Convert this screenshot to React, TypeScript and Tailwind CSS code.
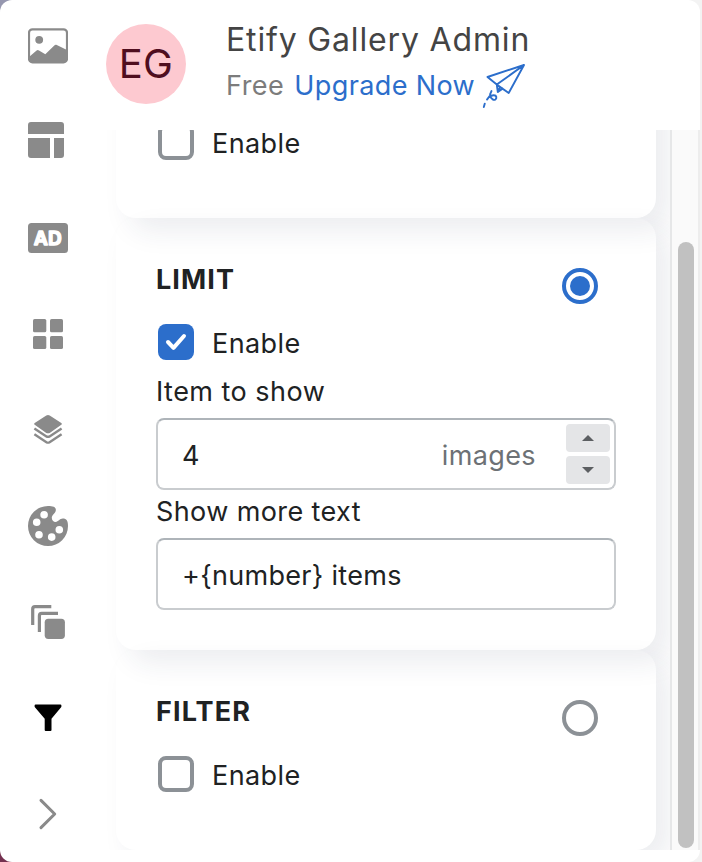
import React from "react";

function Icon({ children, active = false }: { children: React.ReactNode; active?: boolean }) {
  return (
    <button className={`flex h-24 w-24 shrink-0 items-center justify-center ${active ? "text-black" : "text-[#8a8a8a]"}`}>
      <svg width="40" height="40" viewBox="0 0 40 40" fill="currentColor">
        {children}
      </svg>
    </button>
  );
}

function Sidebar() {
  return (
    <nav className="-mt-0.5 flex w-24 shrink-0 flex-col">
      <Icon>
        <rect x="1" y="3.3" width="38" height="33" rx="3.5" fill="none" stroke="currentColor" strokeWidth="2.2" />
        <circle cx="11.2" cy="13.8" r="3.9" />
        <path d="M1 31l7.6-6.6c.8-.7 1.6-.7 2.4 0L17.3 28.3l9-8.8c.9-.9 1.5-.9 2.5-.4L39 24v9.5a3 3 0 0 1-3 3H4a3 3 0 0 1-3-3z" />
      </Icon>
      <Icon>
        <path d="M3 0h30a3 3 0 0 1 3 3v9H0V3a3 3 0 0 1 3-3zM0 16h22v20H3a3 3 0 0 1-3-3zM26 16h10v17a3 3 0 0 1-3 3h-7z" />
      </Icon>
      <Icon>
        <rect y="5" width="40" height="30" rx="3.5" />
        <text x="19.8" y="27" textAnchor="middle" fill="white" stroke="white" strokeWidth="1.3" strokeLinejoin="round" className="font-['Inter',sans-serif] text-[19px] font-bold">AD</text>
      </Icon>
      <Icon>
        <rect x="5" y="5" width="13.3" height="13.3" rx="1.6" />
        <rect x="22" y="5" width="13" height="13.3" rx="1.6" />
        <rect x="5" y="22" width="13.3" height="13" rx="1.6" />
        <rect x="22" y="22" width="13" height="13" rx="1.6" />
      </Icon>
      <Icon>
        <path d="M18.3 5.5q1.7-.9 3.4 0l11.6 7.4q1.4.9 0 1.8l-11.6 8.2q-1.7.9-3.4 0l-11.6-8.2q-1.4-.9 0-1.8z" />
        <path d="M6.4 18.4l12 8q1.6.9 3.2 0l12-8M6.4 24.2l12 8q1.6.9 3.2 0l12-8" fill="none" stroke="currentColor" strokeWidth="2.4" />
      </Icon>
      <Icon>
        <path fillRule="evenodd" d="M20 0c5.5 0 8.8 1.2 7.6 5.2-.5 1.9-3.8 3.8-3.8 6.6 0 2.4 1.6 4.2 3.9 4.2 2.5 0 4-3.4 7.1-3.4 3.7 0 5.2 2.3 5.2 7.4a20 20 0 1 1-20-20zM16.1 5a3.8 3.8 0 1 0 0 7.6 3.8 3.8 0 0 0 0-7.6zM8.7 12.5a3.8 3.8 0 1 0 0 7.6 3.8 3.8 0 0 0 0-7.6zM11 24.9a3.8 3.8 0 1 0 0 7.6 3.8 3.8 0 0 0 0-7.6zM23.7 27.3a3.8 3.8 0 1 0 0 7.6 3.8 3.8 0 0 0 0-7.6zM31.3 19.9a3.8 3.8 0 1 0 0 7.6 3.8 3.8 0 0 0 0-7.6z" />
      </Icon>
      <Icon>
        <path d="M23.3 4.7H7a2.3 2.3 0 0 0-2.3 2.3v16M30 11.4H13.7a2.3 2.3 0 0 0-2.3 2.3v16.3" fill="none" stroke="currentColor" strokeWidth="3.2" />
        <rect x="16.7" y="16.7" width="20.2" height="20.2" rx="3.6" />
      </Icon>
      <Icon active>
        <path d="M7.6 6.5h24.8q1 0 1 1v.9q0 .6-.5 1.1l-9.4 11.3V32q0 1-1 1h-4.8q-1 0-1-1V20.8L7.1 9.5q-.5-.5-.5-1.1v-.9q0-1 1-1z" />
      </Icon>
      <Icon>
        <path d="M13 6.4L26.7 20 13 33.6" fill="none" stroke="currentColor" strokeWidth="3" strokeLinecap="round" strokeLinejoin="round" />
      </Icon>
    </nav>
  );
}

function PaperPlane() {
  return (
    <svg width="48" height="50" viewBox="0 0 48 50" fill="none" stroke="#2c6ecb" strokeWidth="1.9" strokeLinejoin="round" strokeLinecap="round" className="ml-[5px]">
      <path d="M44 5L7.5 17l9.3 7.6L28.7 33zM44 5L16.8 24.6l1 7.4 4.8-3.4M17.8 32l1.8-4" />
      <path d="M11.5 31c-1.8 3.2-1.8 6.6 1.2 8.4 2 1.2 4-.4 3.6-2.4-.5-2.4-4.6-2.2-6.8 0M10.4 35l-3.4 4.6M4.8 43.6L3.8 47" />
    </svg>
  );
}

function Header() {
  return (
    <header className="flex h-[130px] shrink-0 pl-2.5">
      <div className="mt-6 flex h-20 w-20 items-center justify-center rounded-full bg-[#fdc9d0] text-[40px] tracking-[0.2px] text-[#4f0e1f]">EG</div>
      <div className="ml-10 flex flex-col">
        <h1 className="mt-5 text-[32px] leading-10 tracking-[0.84px] text-[#444]">Etify Gallery Admin</h1>
        <div className="flex h-[50px] items-center whitespace-nowrap text-[27px]">
          <span className="pt-0.5 tracking-[0.5px] text-[#7c7c7c]">Free</span>
          <a className="ml-2.5 pt-0.5 tracking-[0.38px] text-[#2c6ecb]">Upgrade Now</a>
          <PaperPlane />
        </div>
      </div>
    </header>
  );
}

function EnableRow({ checked = false }: { checked?: boolean }) {
  return (
    <label className="ml-0.5 flex h-9 items-center gap-[18px]">
      <span className={`flex h-9 w-9 items-center justify-center rounded-lg ${checked ? "bg-[#2c6ecb]" : "border-4 border-[#8c9196] bg-white"}`}>
        {checked && (
          <svg width="36" height="36" viewBox="0 0 36 36" fill="none" stroke="white" strokeWidth="4" strokeLinecap="round" strokeLinejoin="round">
            <path d="M10 18l5.5 5.8L26 12" />
          </svg>
        )}
      </span>
      <span className="mt-1 text-[27px] leading-9 tracking-[0.4px]">Enable</span>
    </label>
  );
}

function Section({ title, selected = false, children }: { title?: string; selected?: boolean; children: React.ReactNode }) {
  return (
    <section className="flex shrink-0 flex-col rounded-[20px] px-10 pt-10 pb-10 shadow-[14px_13px_28px_rgba(33,50,80,0.085)]">
      <div className="flex h-[66px] justify-between">
        {title && (
          <>
            <h2 className="text-[27px] leading-[44px] font-bold tracking-[1.1px]">{title}</h2>
            <span className={`mt-2.5 mr-[18px] flex h-9 w-9 items-center justify-center rounded-full border-4 ${selected ? "border-[#2c6ecb]" : "border-[#8c9196]"}`}>
              {selected && <span className="h-5 w-5 rounded-full bg-[#2c6ecb]" />}
            </span>
          </>
        )}
      </div>
      {children}
    </section>
  );
}

function Spinner() {
  return (
    <div className="flex flex-col gap-1 text-[#5c5f62]">
      <button className="flex h-7 w-11 items-center justify-center rounded bg-[#e4e5e7]">
        <svg width="12" height="6" viewBox="0 0 12 6" fill="currentColor"><path d="M0 6L6 0l6 6z" /></svg>
      </button>
      <button className="flex h-7 w-11 items-center justify-center rounded bg-[#e4e5e7]">
        <svg width="12" height="6" viewBox="0 0 12 6" fill="currentColor"><path d="M0 0l6 6 6-6z" /></svg>
      </button>
    </div>
  );
}

const field = "flex h-[72px] items-center rounded-lg border-2 border-[#c9cccf] border-t-[#aeb4b9] bg-white pl-6 pr-1 text-[27px]";

export default function App() {
  return (
    <div className="h-[862px] w-[702px] overflow-hidden bg-[linear-gradient(to_right,transparent_50%,#f3f3f3_50%),linear-gradient(to_bottom,#9697af_50%,#74304f_50%)] font-['Inter','Liberation_Sans',sans-serif] text-[#202223]">
      <div className="flex h-full w-[700px] overflow-hidden rounded-xl bg-white">
        <Sidebar />
        <div className="flex w-[604px] flex-col">
          <Header />
          <div className="flex h-[720px] shrink-0">
            <main className="flex w-[574px] flex-col justify-end overflow-hidden pr-3.5 pl-5">
              <Section>
                <EnableRow />
                <div className="h-[18px]" />
              </Section>
              <Section title="LIMIT" selected>
                <EnableRow checked />
                <div className="mt-2.5 h-12 pt-1 text-[27px] leading-[36px] tracking-[0.47px]">Item to show</div>
                <div className={field}>
                  <span className="grow pt-[5px]">4</span>
                  <span className="mr-[30px] pt-[5px] tracking-[0.4px] text-[#6d7175]">images</span>
                  <Spinner />
                </div>
                <div className="h-12 pt-1 text-[27px] leading-[36px] tracking-[0.4px]">Show more text</div>
                <div className={field}><span className="pt-[5px] tracking-[0.3px]">+{"{number}"} items</span></div>
              </Section>
              <Section title="FILTER">
                <EnableRow />
                <div className="h-[18px]" />
              </Section>
            </main>
            <div className="flex w-[30px] border-r-2 border-l-2 border-r-[#ededed] border-l-[#e6e7e8] bg-[#fafafa] pl-1.5">
              <div className="mt-28 h-[606px] w-4 rounded-full bg-[#c1c1c1]" />
            </div>
          </div>
        </div>
      </div>
    </div>
  );
}
